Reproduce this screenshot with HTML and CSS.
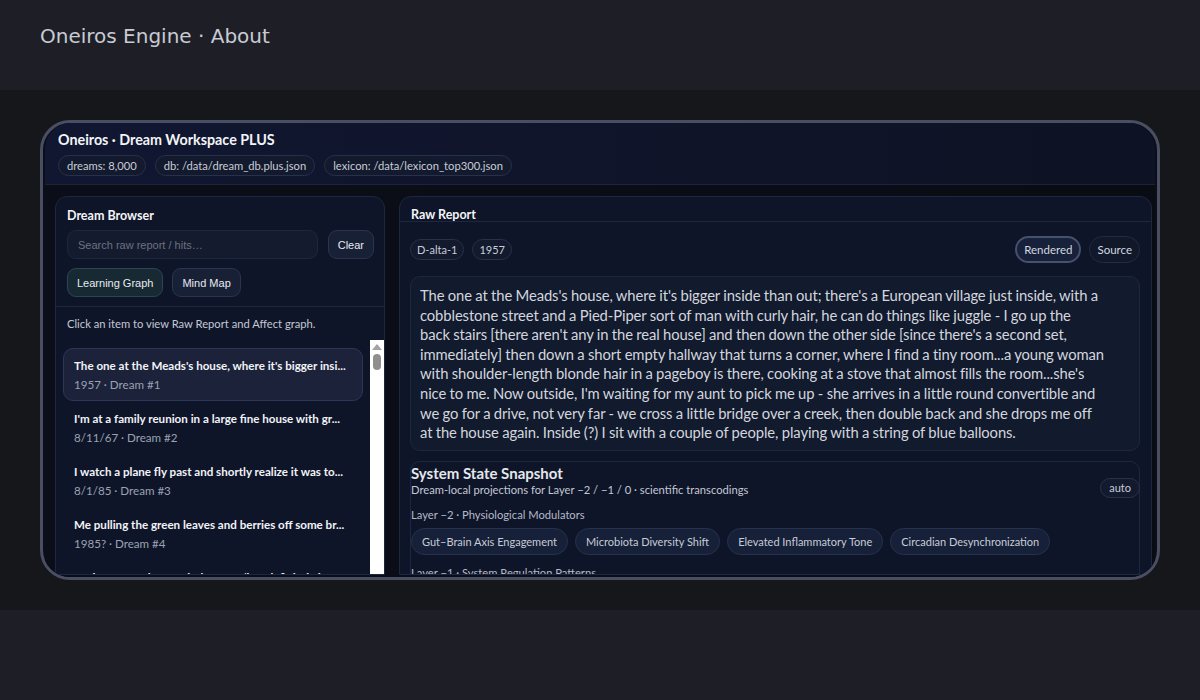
FILE: index.html
```html
<!DOCTYPE html>
<html lang="en">
<head>
<meta charset="utf-8">
<title>Oneiros Engine · About</title>
<link rel="stylesheet" href="styles.css">
</head>
<body>
<header class="topbar">
  <h1 class="site-title">Oneiros Engine · About</h1>
</header>
<main class="stage">
  <div class="frame">
    <div class="app">
      <div class="app-head">
        <div class="app-title">Oneiros · Dream Workspace PLUS</div>
        <div class="pill-row">
          <span class="pill">dreams: 8,000</span>
          <span class="pill">db: /data/dream_db.plus.json</span>
          <span class="pill">lexicon: /data/lexicon_top300.json</span>
        </div>
      </div>
      <div class="app-body">
        <section class="panel browser">
          <div class="browser-top">
            <div class="panel-title">Dream Browser</div>
            <div class="search-row">
              <input class="search" type="text" placeholder="Search raw report / hits…">
              <button class="btn">Clear</button>
            </div>
            <div class="btn-row">
              <button class="btn btn-teal">Learning Graph</button>
              <button class="btn">Mind Map</button>
            </div>
          </div>
          <p class="hint">Click an item to view Raw Report and Affect graph.</p>
          <div class="list-wrap">
            <ul class="dream-list">
              <li class="dream active">
                <div class="dream-title">The one at the Meads's house, where it's bigger insi...</div>
                <div class="dream-meta">1957 · Dream #1</div>
              </li>
              <li class="dream">
                <div class="dream-title">I'm at a family reunion in a large fine house with gr...</div>
                <div class="dream-meta">8/11/67 · Dream #2</div>
              </li>
              <li class="dream">
                <div class="dream-title">I watch a plane fly past and shortly realize it was to...</div>
                <div class="dream-meta">8/1/85 · Dream #3</div>
              </li>
              <li class="dream">
                <div class="dream-title">Me pulling the green leaves and berries off some br...</div>
                <div class="dream-meta">1985? · Dream #4</div>
              </li>
              <li class="dream">
                <div class="dream-title">I'm in a room that reminds me of (but definitely isn't...</div>
                <div class="dream-meta">1985 · Dream #5</div>
              </li>
            </ul>
            <div class="scrollbar">
              <span class="sb-arrow"></span>
              <span class="sb-thumb"></span>
            </div>
          </div>
        </section>
        <section class="panel report">
          <div class="report-head">Raw Report</div>
          <div class="report-inner">
            <div class="tag-row">
              <div class="tags">
                <span class="tag">D-alta-1</span>
                <span class="tag">1957</span>
              </div>
              <div class="toggles">
                <button class="toggle on">Rendered</button>
                <button class="toggle">Source</button>
              </div>
            </div>
            <p class="report-text">The one at the Meads's house, where it's bigger inside than out; there's a European village just inside, with a<br>cobblestone street and a Pied-Piper sort of man with curly hair, he can do things like juggle - I go up the<br>back stairs [there aren't any in the real house] and then down the other side [since there's a second set,<br>immediately] then down a short empty hallway that turns a corner, where I find a tiny room...a young woman<br>with shoulder-length blonde hair in a pageboy is there, cooking at a stove that almost fills the room...she's<br>nice to me. Now outside, I'm waiting for my aunt to pick me up - she arrives in a little round convertible and<br>we go for a drive, not very far - we cross a little bridge over a creek, then double back and she drops me off<br>at the house again. Inside (?) I sit with a couple of people, playing with a string of blue balloons.</p>
            <div class="snapshot">
              <div class="snap-head">
                <div>
                  <div class="snap-title">System State Snapshot</div>
                  <div class="snap-sub">Dream-local projections for Layer −2 / −1 / 0 · scientific transcodings</div>
                </div>
                <span class="tag auto">auto</span>
              </div>
              <div class="layer-label">Layer −2 · Physiological Modulators</div>
              <div class="chips">
                <span class="chip">Gut–Brain Axis Engagement</span>
                <span class="chip">Microbiota Diversity Shift</span>
                <span class="chip">Elevated Inflammatory Tone</span>
                <span class="chip">Circadian Desynchronization</span>
              </div>
              <div class="layer-label">Layer −1 · System Regulation Patterns</div>
            </div>
          </div>
        </section>
      </div>
    </div>
  </div>
</main>
<footer class="bottom"></footer>
</body>
</html>
```
FILE: styles.css
```css
* { box-sizing: border-box; }
html, body { margin: 0; padding: 0; }
body {
  background: #1e1f26;
  font-family: "DejaVu Sans", sans-serif;
  height: 700px;
  overflow: hidden;
}
.topbar {
  height: 90px;
  padding: 23px 40px 0;
}
.site-title {
  margin: 0;
  font-family: "DejaVu Sans", sans-serif;
  font-weight: normal;
  font-size: 20px;
  line-height: 26px;
  color: #c9cbd4;
}
.stage {
  background: #16171b;
  height: 520px;
  padding: 30px 40px;
}
.frame {
  height: 460px;
  border: 3px solid #4a4e63;
  border-radius: 30px;
  overflow: hidden;
  background: #0b0e18;
  padding: 0 2px;
}
.app {
  height: 100%;
  font-family: Lato, "Noto Sans", sans-serif;
  color: #e5e7eb;
  background: #0a0d17;
  border-radius: 26px 26px 0 0;
  overflow: hidden;
}
.app-head {
  background: linear-gradient(90deg, #111731 0%, #0f1429 60%, #0d1224 100%);
  padding: 8px 13px 8px;
  border-bottom: 1px solid #1d2439;
}
.app-title {
  font-size: 14.3px;
  font-weight: 700;
  line-height: 18px;
  color: #f3f4f6;
}
.pill-row {
  display: flex;
  gap: 9px;
  margin-top: 6px;
}
.pill, .tag {
  display: inline-flex;
  align-items: center;
  height: 21px;
  padding: 0 8px;
  border: 1px solid #27314b;
  border-radius: 11px;
  background: #131a2e;
  font-size: 11.2px;
  color: #c8ccd6;
}
.tag { padding: 0 6px; font-size: 11px; }
.app-body {
  display: grid;
  grid-template-columns: 330px 753px;
  gap: 14px;
  padding: 11px 0 0 10px;
  height: 390px;
  background: linear-gradient(90deg, #0b0e18, #0a0c14);
}
.panel {
  background: #0f1529;
  border: 1px solid #1e2740;
  border-radius: 12px;
  min-height: 0;
  overflow: hidden;
}
.browser {
  display: flex;
  flex-direction: column;
  border-bottom-left-radius: 0;
  border-bottom-right-radius: 0;
}
.browser-top {
  padding: 10px 10px 9px 11px;
  border-bottom: 1px solid #1e2740;
}
.panel-title, .report-head {
  font-size: 12.5px;
  font-weight: 700;
  color: #f3f4f6;
  line-height: 18px;
}
.search-row {
  display: flex;
  gap: 10px;
  margin-top: 5px;
}
.search {
  flex: 1;
  height: 29px;
  background: #141b2f;
  border: 1px solid #1e2740;
  border-radius: 9px;
  padding: 0 10px;
  font-family: "Liberation Sans", Arial, sans-serif;
  font-size: 11px;
  color: #e5e7eb;
  outline: none;
}
.search::placeholder { color: #6b7280; }
.btn {
  height: 29px;
  padding: 0 9px;
  background: #182036;
  border: 1px solid #2a3450;
  border-radius: 9px;
  font-family: "Liberation Sans", Arial, sans-serif;
  font-size: 11px;
  color: #e8eaf0;
}
.btn-row {
  display: flex;
  gap: 9px;
  margin-top: 9px;
}
.btn-teal {
  background: #172a33;
  border-color: #2a4650;
}
.hint {
  margin: 0;
  padding: 9px 11px 8px;
  font-size: 11.2px;
  line-height: 16px;
  color: #c3c8d3;
}
.list-wrap {
  flex: 1;
  display: flex;
  min-height: 0;
}
.dream-list {
  list-style: none;
  margin: 0;
  padding: 8px 7px 0 7px;
  flex: 1;
  overflow: hidden;
}
.dream {
  height: 53px;
  padding: 8px 10px 0;
  border: 1px solid transparent;
  border-radius: 10px;
}
.dream.active {
  background: #1b2239;
  border-color: #2c3656;
}
.dream-title {
  font-size: 11.6px;
  font-weight: 700;
  line-height: 18px;
  color: #f1f3f7;
  white-space: nowrap;
  overflow: hidden;
}
.dream-meta {
  font-size: 11.6px;
  line-height: 18px;
  margin-top: 1px;
  color: #9aa2b3;
}
.scrollbar {
  width: 14px;
  background: #ffffff;
  display: flex;
  flex-direction: column;
  align-items: center;
  padding-top: 4px;
}
.sb-arrow {
  width: 0;
  height: 0;
  border-left: 5px solid transparent;
  border-right: 5px solid transparent;
  border-bottom: 6px solid #a3a3a3;
}
.sb-thumb {
  width: 8px;
  height: 16px;
  margin-top: 4px;
  border-radius: 4px;
  background: #8f8f8f;
}
.report {
  display: flex;
  flex-direction: column;
  border-bottom-left-radius: 0;
  border-bottom-right-radius: 0;
}
.report-head {
  padding: 11px 11px 0;
  height: 25px;
  border-bottom: 1px solid #1e2740;
  line-height: 14px;
}
.report-inner {
  padding: 14px 11px 0 10px;
}
.tag-row {
  display: flex;
  justify-content: space-between;
  align-items: center;
}
.tags { display: flex; gap: 8px; }
.toggles { display: flex; gap: 8px; }
.toggle {
  height: 27px;
  padding: 0 7px;
  border-radius: 14px;
  background: #111829;
  border: 1px solid #222b44;
  font-family: Lato, sans-serif;
  font-size: 11.5px;
  color: #d3d7e0;
}
.toggle.on {
  background: #18213a;
  border: 2px solid #46516f;
  padding: 0 7px;
}
.report-text {
  margin: 13px 0 0;
  background: #121a2d;
  border: 1px solid #1e2740;
  border-radius: 10px;
  padding: 9px 4px 7px 9px;
  font-size: 14.8px;
  line-height: 19.6px;
  letter-spacing: -0.1px;
  word-spacing: -0.3px;
  color: #d2d6de;
  white-space: nowrap;
  overflow: hidden;
}
.snapshot {
  margin-top: 10px;
  border: 1px solid #1e2740;
  border-radius: 10px;
  padding: 2px 0 0 0;
  height: 130px;
}
.snap-head {
  display: flex;
  justify-content: space-between;
  align-items: flex-end;
}
.snap-title {
  font-size: 15px;
  font-weight: 700;
  line-height: 18px;
  color: #e5e7eb;
}
.snap-sub {
  font-size: 11.2px;
  line-height: 16px;
  color: #c3c8d3;
}
.tag.auto {
  height: 20px;
  margin-right: -1px;
  margin-bottom: 0;
  padding: 0 8px;
  border-radius: 10px;
}
.layer-label {
  margin-top: 9px;
  font-size: 11.2px;
  line-height: 16px;
  color: #b4bac7;
}
.chips {
  display: flex;
  gap: 7px;
  margin-top: 5px;
}
.chip {
  display: inline-flex;
  align-items: center;
  height: 27px;
  padding: 0 10px;
  border-radius: 14px;
  border: 1px solid #27314b;
  background: #162039;
  font-size: 11px;
  color: #c8ccd6;
}
.chips + .layer-label { margin-top: 10px; }
.bottom { height: 90px; }
```
